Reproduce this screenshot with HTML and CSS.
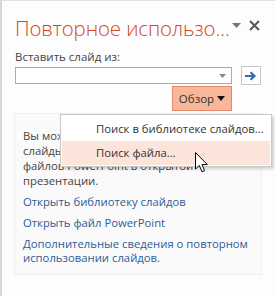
FILE: index.html
```html
<!DOCTYPE html>
<html lang="ru">
<head>
<meta charset="utf-8">
<link rel="stylesheet" href="styles.css">
</head>
<body>
<div class="pane">
  <div class="header">
    <div class="title">Повторное использо...</div>
    <div class="head-icons">
      <svg class="caret-icon" width="9" height="5" viewBox="0 0 9 5"><path d="M0 0H9L4.5 5Z" fill="#777"/></svg>
      <svg class="close-icon" width="11" height="11" viewBox="0 0 11 11"><path d="M1 1L10 10M10 1L1 10" stroke="#555" stroke-width="2"/></svg>
    </div>
  </div>
  <div class="label">Вставить слайд из:</div>
  <div class="input-row">
    <div class="combo">
      <svg width="7" height="4" viewBox="0 0 7 4"><path d="M0 0H7L3.5 4Z" fill="#888"/></svg>
    </div>
    <div class="go-btn">
      <svg width="12" height="10" viewBox="0 0 12 10"><path d="M0 5H9M5.5 1.2L9.5 5L5.5 8.8" stroke="#2f6cb5" stroke-width="2.2" fill="none"/></svg>
    </div>
  </div>
  <div class="btn-row">
    <div class="browse-btn">Обзор <svg width="8" height="5" viewBox="0 0 8 5"><path d="M0 0H8L4 5Z" fill="#111"/></svg></div>
  </div>
  <div class="info">
    <p class="desc">Вы можете вставлять<br>слайды из библиотек слайдов или<br>файлов PowerPoint в открытой<br>презентации.</p>
    <a class="link">Открыть библиотеку слайдов</a>
    <a class="link">Открыть файл PowerPoint</a>
    <a class="link more">Дополнительные сведения о повторном<br>использовании слайдов.</a>
  </div>
  <div class="menu">
    <div class="menu-item">Поиск в библиотеке слайдов...</div>
    <div class="menu-item active">Поиск файла...</div>
  </div>
  <svg class="cursor" width="13" height="21" viewBox="0 0 13 21"><path d="M0.5 0.5V17L4.3 13.4L7 19.8L9.6 18.7L7 12.6H12.3Z" fill="#fff" stroke="#000" stroke-width="1" stroke-linejoin="round"/></svg>
</div>
</body>
</html>
```
FILE: styles.css
```css
html, body {
  margin: 0;
  padding: 0;
  background: #ffffff;
}
body {
  width: 275px;
  height: 296px;
  overflow: hidden;
  font-family: "Open Sans", "Noto Sans", sans-serif;
  color: #444444;
}
.pane {
  position: relative;
  box-sizing: border-box;
  height: 296px;
  border-left: 2px solid #d6d6d6;
  border-top: 1px solid #e2e2e2;
  padding: 0 13px 0 13px;
  background: #fdfdfd;
}
.header {
  display: flex;
  align-items: flex-start;
  padding-top: 14px;
  height: 29px;
}
.title {
  font-size: 20.4px;
  font-weight: 300;
  color: #d24726;
  white-space: nowrap;
  line-height: 27px;
  letter-spacing: -0.1px;
}
.head-icons {
  display: flex;
  align-items: center;
  gap: 8px;
  margin-left: auto;
  padding-top: 5px;
  padding-right: 2px;
}
.label {
  font-size: 11.5px;
  margin-top: 5px;
  line-height: 16px;
}
.input-row {
  display: flex;
  align-items: center;
  margin-top: 1px;
}
.combo {
  box-sizing: border-box;
  width: 217px;
  height: 17px;
  border: 1px solid #ababab;
  background: #fff;
  display: flex;
  align-items: center;
  justify-content: flex-end;
  padding-right: 5px;
}
.go-btn {
  box-sizing: border-box;
  width: 20px;
  height: 19px;
  border: 1px solid #c6c6c6;
  background: #fff;
  margin-left: 9px;
  display: flex;
  align-items: center;
  justify-content: center;
}
.btn-row {
  display: flex;
  padding-left: 157px;
  margin-top: 1px;
}
.browse-btn {
  box-sizing: border-box;
  width: 60px;
  height: 25px;
  background: #f8b69b;
  border: 1px solid #e88a68;
  font-size: 11.5px;
  color: #333;
  display: flex;
  align-items: center;
  justify-content: center;
  gap: 3px;
}
.info {
  box-sizing: border-box;
  margin-top: 2px;
  margin-left: -1px;
  width: 248px;
  height: 162px;
  border: 1px solid #efefef;
  background: #fafafa;
  padding: 14px 8px 0 8px;
  font-size: 11.3px;
}
.desc {
  margin: 0 0 7px 0;
  line-height: 15px;
  color: #444;
  white-space: nowrap;
}
.link {
  display: block;
  color: #2e5c96;
  line-height: 14px;
  margin-bottom: 7px;
  white-space: nowrap;
}
.link.more {
  margin-top: 3px;
}
.menu {
  position: absolute;
  left: 58px;
  top: 113px;
  width: 212px;
  box-sizing: border-box;
  border: 1px solid #c8c8c8;
  background: #fff;
  box-shadow: 2px 2px 3px rgba(0,0,0,0.18);
  padding: 2px 1px 1px 1px;
  font-size: 11.3px;
  color: #333;
}
.menu-item {
  height: 24px;
  line-height: 24px;
  padding-left: 34px;
  white-space: nowrap;
}
.menu-item.active {
  background: #fde4db;
}
.cursor {
  position: absolute;
  left: 193px;
  top: 151px;
}
```
